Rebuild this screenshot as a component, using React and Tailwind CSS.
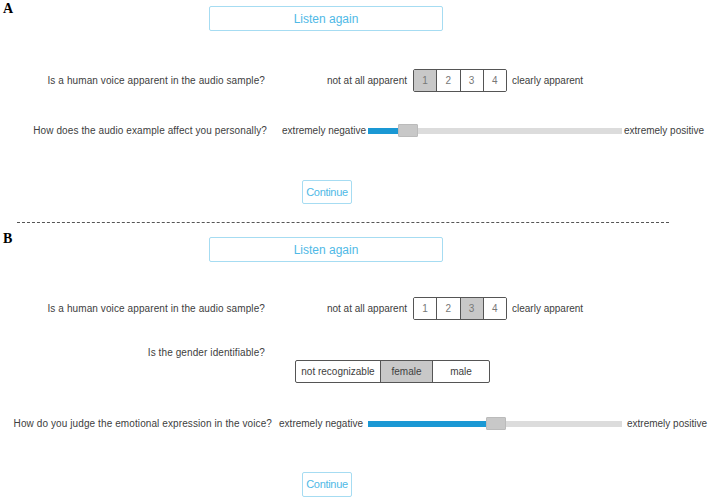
const FONT = "font-['Liberation_Sans',Arial,sans-serif]";

const Listen = () => (
    <button className="mt-[6px] h-[25px] w-[234px] rounded-[2px] border-[1.5px] border-[#a6dcf2] bg-white text-[12px] text-[#4fb9e6]">
        Listen again
    </button>
);

const Continue = ({ h }) => (
    <button
        className={`ml-[302px] block w-[50px] rounded-[2px] border-[1.5px] border-[#a6dcf2] bg-white text-[11px] tracking-[-0.3px] text-[#4fb9e6] ${h}`}
    >
        Continue
    </button>
);

// 1..4 rating boxes
const Scale = ({ label, selected, className = "" }) => (
    <div className={`flex items-center ${className}`}>
        <div className="w-[265px] text-right tracking-[0.1px]">{label}</div>
        <div className="w-[142px] text-right">not at all apparent</div>
        <div className="ml-[6px] flex h-[23px] w-[94px] overflow-hidden rounded-[2px] border border-[#555]">
            {[1, 2, 3, 4].map((n) => (
                <div
                    key={n}
                    className={`flex flex-1 items-center justify-center text-[#777] ${
                        n > 1 ? "border-l border-[#555]" : ""
                    } ${n === selected ? "bg-[#c8c8c8]" : "bg-white"}`}
                >
                    {n}
                </div>
            ))}
        </div>
        <div className="ml-[5px]">clearly apparent</div>
    </div>
);

const Slider = ({ label, labelW, negW, gap, fill, className = "" }) => (
    <div className={`flex h-[13px] items-center ${className}`}>
        <div className="shrink-0 whitespace-nowrap text-right tracking-[0.1px]" style={{ width: labelW }}>
            {label}
        </div>
        <div className="shrink-0 whitespace-nowrap text-right" style={{ width: negW }}>
            extremely negative
        </div>
        <div className="relative h-[6px] w-[254px] shrink-0 bg-[#dcdcdc]" style={{ marginLeft: gap }}>
            <div className="absolute left-0 top-0 h-full bg-[#1a98d4]" style={{ width: fill }} />
            <div
                className="absolute top-[-4px] h-[13px] w-[20px] rounded-[1px] border border-[#bbb] bg-[#c8c8c8]"
                style={{ left: fill }}
            />
        </div>
        <div className="shrink-0 whitespace-nowrap" style={{ marginLeft: gap }}>
            extremely positive
        </div>
    </div>
);

const Letter = ({ children, pad }) => (
    <span className={`w-[209px] pl-[3px] font-['Liberation_Serif',serif] text-[14px] font-bold leading-none text-black ${pad}`}>
        {children}
    </span>
);

export default function App() {
    return (
        <div className={`h-[498px] w-[708px] overflow-hidden bg-white text-[10px] text-[#404040] ${FONT}`}>
            {/* panel A */}
            <div className="flex h-[31px] items-start">
                <Letter pad="pt-[2px]">A</Letter>
                <Listen />
            </div>
            <Scale label="Is a human voice apparent in the audio sample?" selected={1} className="mt-[38px]" />
            <Slider
                label="How does the audio example affect you personally?"
                labelW={267}
                negW={99}
                gap={2}
                fill={30}
                className="mt-[32px]"
            />
            <div className="mt-[43px]">
                <Continue h="h-[24px]" />
            </div>

            <div className="ml-[17px] mt-[18px] w-[652px] border-t border-dashed border-[#555]" />

            {/* panel B */}
            <div className="flex h-[37px] items-start">
                <Letter pad="pt-[9px]">B</Letter>
                <div className="mt-[8px]">
                    <Listen />
                </div>
            </div>
            <Scale label="Is a human voice apparent in the audio sample?" selected={3} className="mt-[37px]" />

            <div className="mt-[26px] flex items-start">
                <div className="w-[265px] text-right leading-[14px] tracking-[0.1px]">Is the gender identifiable?</div>
                <div className="ml-[30px] mt-[14px] flex h-[23px] w-[195px] overflow-hidden rounded-[2px] border border-[#555]">
                    <div className="flex w-[84px] items-center justify-center">not recognizable</div>
                    <div className="flex w-[53px] items-center justify-center border-x border-[#555] bg-[#c8c8c8]">
                        female
                    </div>
                    <div className="flex flex-1 items-center justify-center">male</div>
                </div>
            </div>

            <Slider
                label="How do you judge the emotional expression in the voice?"
                labelW={272}
                negW={91}
                gap={5}
                fill={118}
                className="mt-[34px]"
            />
            <div className="mt-[42px]">
                <Continue h="h-[25px]" />
            </div>
        </div>
    );
}
